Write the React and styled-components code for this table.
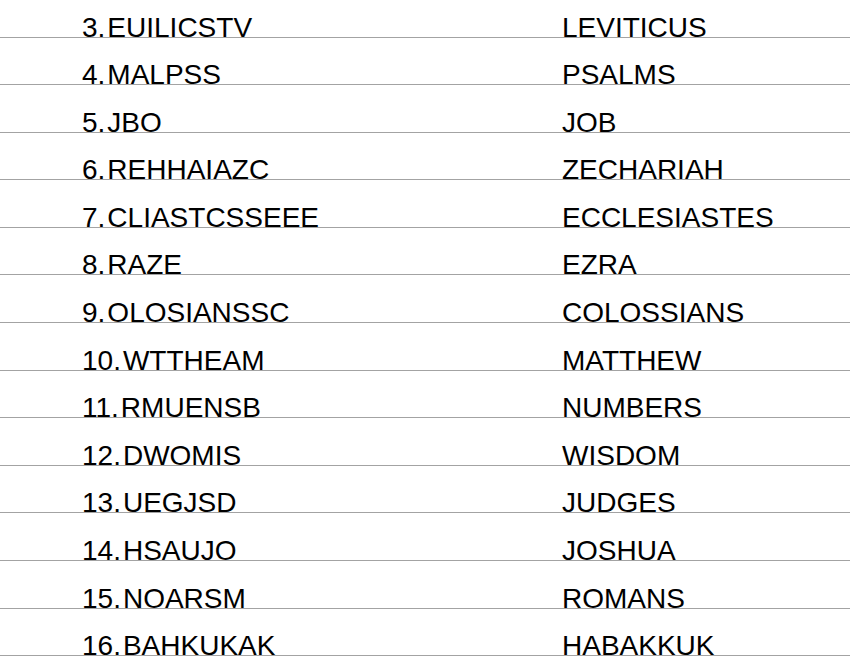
import styled, { createGlobalStyle } from "styled-components";

const GlobalStyle = createGlobalStyle`
  html, body {
    margin: 0;
    padding: 0;
    background: #ffffff;
  }
  body {
    font-family: "Liberation Sans", Arial, sans-serif;
    overflow: hidden;
  }
`;

const Sheet = styled.div`
  width: 850px;
  height: 660px;
  display: flex;
  flex-direction: column;
  overflow: hidden;
`;

const Row = styled.div`
  box-sizing: border-box;
  height: 47.6px;
  flex-shrink: 0;
  display: grid;
  grid-template-columns: 480px 1fr;
  align-items: end;
  padding-left: 82px;
  border-bottom: 1.6px solid #a3a3a3;

  &:first-child {
    height: 37.5px;
  }
`;

const Cell = styled.span`
  display: flex;
  gap: 2px;
  font-size: 28px;
  line-height: 22px;
  color: #000000;
  margin-bottom: -2px;
  white-space: pre;
`;

// number, jumbled word, answer
const pairs = [
  ["3.", "EUILICSTV", "LEVITICUS"],
  ["4.", "MALPSS", "PSALMS"],
  ["5.", "JBO", "JOB"],
  ["6.", "REHHAIAZC", "ZECHARIAH"],
  ["7.", "CLIASTCSSEEE", "ECCLESIASTES"],
  ["8.", "RAZE", "EZRA"],
  ["9.", "OLOSIANSSC", "COLOSSIANS"],
  ["10.", "WTTHEAM", "MATTHEW"],
  ["11.", "RMUENSB", "NUMBERS"],
  ["12.", "DWOMIS", "WISDOM"],
  ["13.", "UEGJSD", "JUDGES"],
  ["14.", "HSAUJO", "JOSHUA"],
  ["15.", "NOARSM", "ROMANS"],
  ["16.", "BAHKUKAK", "HABAKKUK"],
];

export default function App() {
  return (
    <>
      <GlobalStyle />
      <Sheet>
        {pairs.map(([num, jumble, answer]) => (
          <Row key={answer}>
            <Cell>
              <span>{num}</span>
              <span>{jumble}</span>
            </Cell>
            <Cell>{answer}</Cell>
          </Row>
        ))}
      </Sheet>
    </>
  );
}
